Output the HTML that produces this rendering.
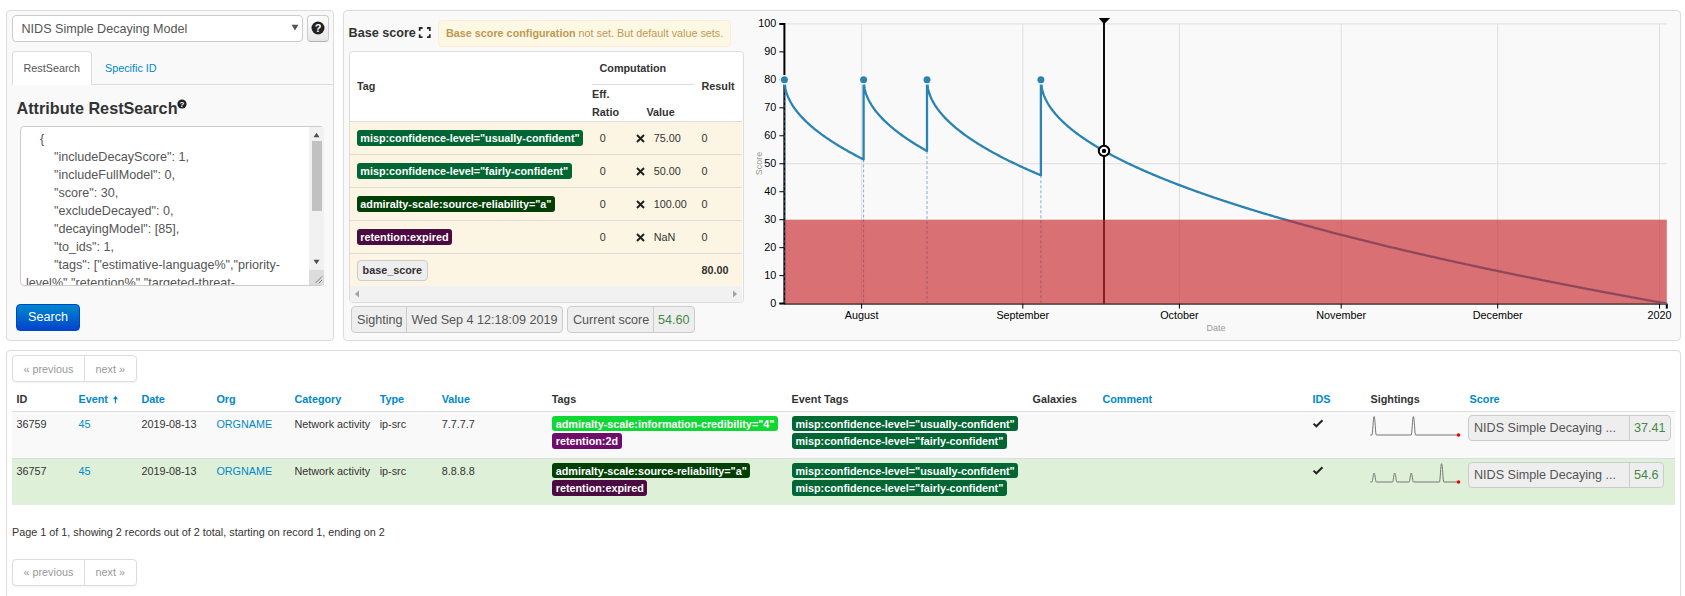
<!DOCTYPE html>
<html><head><meta charset="utf-8">
<style>
*{box-sizing:border-box}
html,body{margin:0;padding:0;background:#fff;width:1685px;height:596px;overflow:hidden;font-family:"Liberation Sans",sans-serif;color:#333;font-size:10.8px}
.abs{position:absolute}
.panel{position:absolute;background:#f9f9f9;border:1px solid #dcdcdc;border-radius:4px}
.lbl{position:absolute;display:inline-block;font-weight:bold;color:#fff;font-size:10.8px;line-height:16px;height:16px;padding:0 3.3px;border-radius:3px;white-space:nowrap}
.lbl2{position:absolute;display:inline-block;font-weight:bold;color:#fff;font-size:10.8px;line-height:17px;height:15px;padding:0 3.5px;border-radius:3px;white-space:nowrap}
a{color:#0088cc;text-decoration:none}
.t{position:absolute;white-space:nowrap}
.b{font-weight:bold}
</style></head><body>

<!-- Panel 1 -->
<div class="panel" style="left:6px;top:10px;width:328px;height:331px"></div>
<div class="abs" style="left:12px;top:15px;width:291px;height:27px;background:#fff;border:1px solid #ccc;border-radius:4px"></div>
<div class="t" style="left:21.5px;top:16px;line-height:27px;font-size:12.6px;color:#555">NIDS Simple Decaying Model</div>
<svg class="abs" style="left:291px;top:24px" width="8" height="7" viewBox="0 0 8 7"><path d="M0.6 0.8H7.4L4 6.6Z" fill="#555"/></svg>
<div class="abs" style="left:307px;top:15px;width:22px;height:27px;background:linear-gradient(#fff,#e6e6e6);border:1px solid #ccc;border-bottom-color:#b3b3b3;border-radius:4px"></div>
<svg class="abs" style="left:311px;top:21px" width="14" height="14" viewBox="0 0 14 14"><circle cx="7" cy="7" r="6.5" fill="#222"/><text x="7" y="11" text-anchor="middle" font-family="Liberation Sans" font-weight="bold" font-size="11" fill="#fff">?</text></svg>

<!-- tabs -->
<div class="abs" style="left:92px;top:84px;width:241px;height:1px;background:#ddd"></div>
<div class="abs" style="left:12px;top:51px;width:80px;height:34px;background:#f9f9f9;border:1px solid #ddd;border-bottom:none;border-radius:4px 4px 0 0"></div>
<div class="abs" style="left:13px;top:52px;width:78px;height:33px;background:#fff;border-radius:4px 4px 0 0"></div>
<div class="t" style="left:23.5px;top:51px;line-height:34px;font-size:10.8px;color:#555">RestSearch</div>
<div class="t" style="left:105px;top:51px;line-height:34px;font-size:10.8px;color:#0088cc">Specific ID</div>

<div class="t b" style="left:16.5px;top:98px;line-height:20px;font-size:16.2px;color:#333">Attribute RestSearch</div>
<svg class="abs" style="left:176.6px;top:98.6px" width="10" height="10" viewBox="0 0 10 10"><circle cx="5" cy="5" r="4.6" fill="#222"/><text x="5" y="8.2" text-anchor="middle" font-family="Liberation Sans" font-weight="bold" font-size="8" fill="#fff">?</text></svg>

<!-- textarea -->
<div class="abs" style="left:20px;top:126px;width:304px;height:160px;background:#fff;border:1px solid #ccc;border-radius:4px;overflow:hidden">
  <div class="abs" style="left:0;top:0;width:290px;padding:3px 0 0 5px;font-size:12.6px;line-height:18px;color:#555;white-space:pre">    {
        "includeDecayScore": 1,
        "includeFullModel": 0,
        "score": 30,
        "excludeDecayed": 0,
        "decayingModel": [85],
        "to_ids": 1,
        "tags": ["estimative-language%","priority-
level%","retention%","targeted-threat-</div>
</div>
<div class="abs" style="left:309px;top:127px;width:15px;height:158px;background:#f1f1f1"></div>
<div class="abs" style="left:311.5px;top:141px;width:10px;height:70px;background:#c1c1c1"></div>
<svg class="abs" style="left:309px;top:127px" width="15" height="158" viewBox="0 0 15 158"><path d="M4.5 10.2H10.5L7.5 5.8Z" fill="#505050"/><path d="M4.5 132.8H10.5L7.5 137.2Z" fill="#505050"/><rect x="0" y="143" width="15" height="15" fill="#dcdcdc"/><path d="M13 149.5L6.5 156M13 153L9.8 156.2" stroke="#6e6e6e" stroke-width="0.9"/></svg>

<div class="abs" style="left:16px;top:304px;width:64px;height:27px;background:linear-gradient(#0088cc,#0044cc);border:1px solid #0044cc;border-radius:4px"></div>
<div class="t" style="left:16px;top:304px;width:64px;text-align:center;line-height:27px;font-size:12.6px;color:#fff">Search</div>

<!-- Panel 2 -->
<div class="panel" style="left:343px;top:10px;width:1338px;height:331px"></div>
<div class="t b" style="left:348.6px;top:23px;line-height:20px;font-size:12.6px;color:#333">Base score</div>
<svg class="abs" style="left:418px;top:26px" width="14" height="13" viewBox="0 0 14 13"><path d="M1.7 5V2H4.6M9 2H11.8V5M11.8 8.2V11.2H9M4.6 11.2H1.7V8.2" fill="none" stroke="#2a2a2a" stroke-width="1.8"/></svg>

<div class="abs" style="left:438px;top:20px;width:293px;height:27px;background:#fcf8e3;border:1px solid #fbeed5;border-radius:4px"></div>
<div class="t" style="left:446px;top:20px;line-height:27px;font-size:10.8px;color:#c09853"><b>Base score configuration</b> not set. But default value sets.</div>

<div class="abs" style="left:349px;top:51px;width:395px;height:252px;background:#fff;border:1px solid #ddd;border-radius:4px;overflow:hidden">
</div>
<div class="t b" style="left:357px;top:79px;line-height:14px;font-size:10.8px">Tag</div>
<div class="t b" style="left:599.5px;top:61px;line-height:14px;font-size:10.8px">Computation</div>
<div class="abs" style="left:592px;top:84px;width:102px;height:1px;background:#ddd"></div>
<div class="t b" style="left:592px;top:87px;line-height:14px;font-size:10.8px">Eff.</div>
<div class="t b" style="left:592px;top:105px;line-height:14px;font-size:10.8px">Ratio</div>
<div class="t b" style="left:646.5px;top:105px;line-height:14px;font-size:10.8px">Value</div>
<div class="t b" style="left:701.5px;top:79px;line-height:14px;font-size:10.8px">Result</div>
<div class="abs" style="left:350px;top:121px;width:392px;height:1px;background:#ddd"></div>
<div class="abs" style="left:350px;top:122px;width:392px;height:32px;background:#fcf5e3"></div>
<div class="abs" style="left:350px;top:154px;width:392px;height:1px;background:#ddd"></div>
<div class="lbl" style="left:357px;top:130px;background:#006633">misp:confidence-level="usually-confident"</div>
<div class="t" style="left:599.8px;top:131px;line-height:14px">0</div>
<svg class="abs" style="left:636px;top:134px" width="9" height="9" viewBox="0 0 9 9"><path d="M1 1L8 8M8 1L1 8" stroke="#222" stroke-width="2"/></svg>
<div class="t" style="left:653.8px;top:131px;line-height:14px">75.00</div>
<div class="t" style="left:701.5px;top:131px;line-height:14px">0</div>
<div class="abs" style="left:350px;top:155px;width:392px;height:32px;background:#fcf5e3"></div>
<div class="abs" style="left:350px;top:187px;width:392px;height:1px;background:#ddd"></div>
<div class="lbl" style="left:357px;top:163px;background:#006633">misp:confidence-level="fairly-confident"</div>
<div class="t" style="left:599.8px;top:164px;line-height:14px">0</div>
<svg class="abs" style="left:636px;top:167px" width="9" height="9" viewBox="0 0 9 9"><path d="M1 1L8 8M8 1L1 8" stroke="#222" stroke-width="2"/></svg>
<div class="t" style="left:653.8px;top:164px;line-height:14px">50.00</div>
<div class="t" style="left:701.5px;top:164px;line-height:14px">0</div>
<div class="abs" style="left:350px;top:188px;width:392px;height:32px;background:#fcf5e3"></div>
<div class="abs" style="left:350px;top:220px;width:392px;height:1px;background:#ddd"></div>
<div class="lbl" style="left:357px;top:196px;background:#013f05">admiralty-scale:source-reliability="a"</div>
<div class="t" style="left:599.8px;top:197px;line-height:14px">0</div>
<svg class="abs" style="left:636px;top:200px" width="9" height="9" viewBox="0 0 9 9"><path d="M1 1L8 8M8 1L1 8" stroke="#222" stroke-width="2"/></svg>
<div class="t" style="left:653.8px;top:197px;line-height:14px">100.00</div>
<div class="t" style="left:701.5px;top:197px;line-height:14px">0</div>
<div class="abs" style="left:350px;top:221px;width:392px;height:32px;background:#fcf5e3"></div>
<div class="abs" style="left:350px;top:253px;width:392px;height:1px;background:#ddd"></div>
<div class="lbl" style="left:357px;top:229px;background:#4b0a41">retention:expired</div>
<div class="t" style="left:599.8px;top:230px;line-height:14px">0</div>
<svg class="abs" style="left:636px;top:233px" width="9" height="9" viewBox="0 0 9 9"><path d="M1 1L8 8M8 1L1 8" stroke="#222" stroke-width="2"/></svg>
<div class="t" style="left:653.8px;top:230px;line-height:14px">NaN</div>
<div class="t" style="left:701.5px;top:230px;line-height:14px">0</div>
<div class="abs" style="left:350px;top:254px;width:392px;height:32px;background:#fcf5e3"></div>
<div class="abs b" style="left:357px;top:260px;height:21px;padding:0 4.6px;line-height:19px;border:1px solid #ccc;border-radius:4px;background:#eee;font-size:10.8px;color:#333">base_score</div>
<div class="t b" style="left:701.5px;top:263px;line-height:14px">80.00</div>
<div class="abs" style="left:350px;top:286px;width:392px;height:16px;background:#f1f1f1"></div>
<svg class="abs" style="left:352px;top:288px" width="12" height="12"><path d="M3 6L7 2.5V9.5Z" fill="#a3a3a3"/></svg>
<svg class="abs" style="left:728px;top:288px" width="12" height="12"><path d="M9 6L5 2.5V9.5Z" fill="#a3a3a3"/></svg>
<div class="abs" style="left:351px;top:306px;width:212px;height:27px;border:1px solid #ccc;border-radius:4px;background:#eee"></div>
<div class="abs" style="left:406px;top:307px;width:1px;height:25px;background:#ccc"></div>
<div class="t" style="left:357px;top:307px;line-height:27px;font-size:12.6px;color:#555">Sighting</div>
<div class="t" style="left:411.5px;top:307px;line-height:27px;font-size:12.6px;color:#555">Wed Sep 4 12:18:09 2019</div>
<div class="abs" style="left:567px;top:306px;width:128px;height:27px;border:1px solid #ccc;border-radius:4px;background:#eee"></div>
<div class="abs" style="left:653px;top:307px;width:1px;height:25px;background:#ccc"></div>
<div class="t" style="left:573px;top:307px;line-height:27px;font-size:12.6px;color:#555">Current score</div>
<div class="t" style="left:658px;top:307px;line-height:27px;font-size:12.6px;color:#468847">54.60</div>

<!-- chart -->
<svg class="abs" style="left:0;top:0" width="1685" height="345" viewBox="0 0 1685 345">
<line x1="784.4" x2="1666.8" y1="303.60" y2="303.60" stroke="#dedede" stroke-width="1"/>
<line x1="784.4" x2="1666.8" y1="163.75" y2="163.75" stroke="#dedede" stroke-width="1"/>
<line x1="784.4" x2="1666.8" y1="23.90" y2="23.90" stroke="#dedede" stroke-width="1"/>
<line x1="861.6" x2="861.6" y1="23.90" y2="303.6" stroke="#dedede" stroke-width="1"/>
<line x1="1022.8" x2="1022.8" y1="23.90" y2="303.6" stroke="#dedede" stroke-width="1"/>
<line x1="1179.4" x2="1179.4" y1="23.90" y2="303.6" stroke="#dedede" stroke-width="1"/>
<line x1="1341.2" x2="1341.2" y1="23.90" y2="303.6" stroke="#dedede" stroke-width="1"/>
<line x1="1497.7" x2="1497.7" y1="23.90" y2="303.6" stroke="#dedede" stroke-width="1"/>
<line x1="1659.5" x2="1659.5" y1="23.90" y2="303.6" stroke="#dedede" stroke-width="1"/>
<line x1="1104" x2="1104" y1="20" y2="303.6" stroke="#000" stroke-width="1.9"/>
<path d="M779.4,23.90H784.4V303.6H779.4" fill="none" stroke="#000" stroke-width="2"/>
<line x1="779.4" x2="784.4" y1="303.60" y2="303.60" stroke="#000" stroke-width="1"/>
<text x="776.3" y="307.00" text-anchor="end" font-family="Liberation Sans" font-size="10.8" fill="#000">0</text>
<line x1="779.4" x2="784.4" y1="275.63" y2="275.63" stroke="#000" stroke-width="1"/>
<text x="776.3" y="279.03" text-anchor="end" font-family="Liberation Sans" font-size="10.8" fill="#000">10</text>
<line x1="779.4" x2="784.4" y1="247.66" y2="247.66" stroke="#000" stroke-width="1"/>
<text x="776.3" y="251.06" text-anchor="end" font-family="Liberation Sans" font-size="10.8" fill="#000">20</text>
<line x1="779.4" x2="784.4" y1="219.69" y2="219.69" stroke="#000" stroke-width="1"/>
<text x="776.3" y="223.09" text-anchor="end" font-family="Liberation Sans" font-size="10.8" fill="#000">30</text>
<line x1="779.4" x2="784.4" y1="191.72" y2="191.72" stroke="#000" stroke-width="1"/>
<text x="776.3" y="195.12" text-anchor="end" font-family="Liberation Sans" font-size="10.8" fill="#000">40</text>
<line x1="779.4" x2="784.4" y1="163.75" y2="163.75" stroke="#000" stroke-width="1"/>
<text x="776.3" y="167.15" text-anchor="end" font-family="Liberation Sans" font-size="10.8" fill="#000">50</text>
<line x1="779.4" x2="784.4" y1="135.78" y2="135.78" stroke="#000" stroke-width="1"/>
<text x="776.3" y="139.18" text-anchor="end" font-family="Liberation Sans" font-size="10.8" fill="#000">60</text>
<line x1="779.4" x2="784.4" y1="107.81" y2="107.81" stroke="#000" stroke-width="1"/>
<text x="776.3" y="111.21" text-anchor="end" font-family="Liberation Sans" font-size="10.8" fill="#000">70</text>
<line x1="779.4" x2="784.4" y1="79.84" y2="79.84" stroke="#000" stroke-width="1"/>
<text x="776.3" y="83.24" text-anchor="end" font-family="Liberation Sans" font-size="10.8" fill="#000">80</text>
<line x1="779.4" x2="784.4" y1="51.87" y2="51.87" stroke="#000" stroke-width="1"/>
<text x="776.3" y="55.27" text-anchor="end" font-family="Liberation Sans" font-size="10.8" fill="#000">90</text>
<line x1="779.4" x2="784.4" y1="23.90" y2="23.90" stroke="#000" stroke-width="1"/>
<text x="776.3" y="27.30" text-anchor="end" font-family="Liberation Sans" font-size="10.8" fill="#000">100</text>
<line x1="784.4" x2="1666.8" y1="303.90000000000003" y2="303.90000000000003" stroke="#000" stroke-opacity="0.6" stroke-width="2"/>
<path d="M1666.8,308.6V303.6" fill="none" stroke="#000" stroke-width="2"/>
<line x1="861.6" x2="861.6" y1="303.6" y2="308.6" stroke="#000" stroke-width="1"/>
<text x="861.6" y="318.8" text-anchor="middle" font-family="Liberation Sans" font-size="10.8" fill="#000">August</text>
<line x1="1022.8" x2="1022.8" y1="303.6" y2="308.6" stroke="#000" stroke-width="1"/>
<text x="1022.8" y="318.8" text-anchor="middle" font-family="Liberation Sans" font-size="10.8" fill="#000">September</text>
<line x1="1179.4" x2="1179.4" y1="303.6" y2="308.6" stroke="#000" stroke-width="1"/>
<text x="1179.4" y="318.8" text-anchor="middle" font-family="Liberation Sans" font-size="10.8" fill="#000">October</text>
<line x1="1341.2" x2="1341.2" y1="303.6" y2="308.6" stroke="#000" stroke-width="1"/>
<text x="1341.2" y="318.8" text-anchor="middle" font-family="Liberation Sans" font-size="10.8" fill="#000">November</text>
<line x1="1497.7" x2="1497.7" y1="303.6" y2="308.6" stroke="#000" stroke-width="1"/>
<text x="1497.7" y="318.8" text-anchor="middle" font-family="Liberation Sans" font-size="10.8" fill="#000">December</text>
<line x1="1659.5" x2="1659.5" y1="303.6" y2="308.6" stroke="#000" stroke-width="1"/>
<text x="1659.5" y="318.8" text-anchor="middle" font-family="Liberation Sans" font-size="10.8" fill="#000">2020</text>
<line x1="784.4" x2="784.4" y1="79.84" y2="303.6" stroke="#2b83b2" stroke-opacity="0.6" stroke-width="1" stroke-dasharray="3,2"/>
<line x1="863.6" x2="863.6" y1="159.44" y2="303.6" stroke="#2b83b2" stroke-opacity="0.6" stroke-width="1" stroke-dasharray="3,2"/>
<line x1="927.0" x2="927.0" y1="151.06" y2="303.6" stroke="#2b83b2" stroke-opacity="0.6" stroke-width="1" stroke-dasharray="3,2"/>
<line x1="1040.9" x2="1040.9" y1="175.29" y2="303.6" stroke="#2b83b2" stroke-opacity="0.6" stroke-width="1" stroke-dasharray="3,2"/>
<path d="M784.40,79.84L785.38,88.68L786.36,92.35L787.33,95.16L788.31,97.53L789.29,99.62L790.27,101.50L791.24,103.24L792.22,104.85L793.20,106.37L794.18,107.81L795.16,109.17L796.13,110.48L797.11,111.73L798.09,112.93L799.07,114.09L800.04,115.22L801.02,116.30L802.00,117.36L802.98,118.39L803.96,119.39L804.93,120.37L805.91,121.32L806.89,122.25L807.87,123.17L808.84,124.06L809.82,124.94L810.80,125.79L811.78,126.64L812.76,127.47L813.73,128.28L814.71,129.08L815.69,129.87L816.67,130.65L817.64,131.41L818.62,132.16L819.60,132.90L820.58,133.64L821.56,134.36L822.53,135.07L823.51,135.77L824.49,136.47L825.47,137.16L826.44,137.83L827.42,138.50L828.40,139.17L829.38,139.82L830.36,140.47L831.33,141.11L832.31,141.75L833.29,142.38L834.27,143.00L835.24,143.62L836.22,144.23L837.20,144.83L838.18,145.43L839.16,146.02L840.13,146.61L841.11,147.19L842.09,147.77L843.07,148.35L844.04,148.91L845.02,149.48L846.00,150.04L846.98,150.59L847.96,151.14L848.93,151.69L849.91,152.23L850.89,152.77L851.87,153.30L852.84,153.83L853.82,154.36L854.80,154.88L855.78,155.40L856.76,155.92L857.73,156.43L858.71,156.94L859.69,157.45L860.67,157.95L861.64,158.45L862.62,158.94L863.60,159.44L863.60,79.84L864.58,88.67L865.55,92.33L866.53,95.14L867.50,97.51L868.48,99.59L869.45,101.48L870.43,103.21L871.40,104.82L872.38,106.34L873.35,107.77L874.33,109.14L875.30,110.44L876.28,111.69L877.26,112.89L878.23,114.05L879.21,115.17L880.18,116.26L881.16,117.32L882.13,118.34L883.11,119.34L884.08,120.32L885.06,121.27L886.03,122.20L887.01,123.11L887.98,124.01L888.96,124.88L889.94,125.74L890.91,126.58L891.89,127.41L892.86,128.22L893.84,129.02L894.81,129.81L895.79,130.58L896.76,131.35L897.74,132.10L898.71,132.84L899.69,133.57L900.66,134.29L901.64,135.00L902.62,135.71L903.59,136.40L904.57,137.09L905.54,137.76L906.52,138.43L907.49,139.09L908.47,139.75L909.44,140.40L910.42,141.04L911.39,141.67L912.37,142.30L913.34,142.92L914.32,143.54L915.30,144.15L916.27,144.75L917.25,145.35L918.22,145.94L919.20,146.53L920.17,147.11L921.15,147.69L922.12,148.26L923.10,148.83L924.07,149.39L925.05,149.95L926.02,150.51L927.00,151.06L927.00,79.84L927.99,88.74L928.98,92.43L929.97,95.26L930.96,97.64L931.95,99.74L932.94,101.64L933.93,103.39L934.92,105.02L935.91,106.54L936.90,107.99L937.89,109.36L938.89,110.67L939.88,111.93L940.87,113.14L941.86,114.31L942.85,115.44L943.84,116.54L944.83,117.60L945.82,118.64L946.81,119.65L947.80,120.63L948.79,121.59L949.78,122.53L950.77,123.45L951.76,124.35L952.75,125.23L953.74,126.09L954.73,126.94L955.72,127.77L956.71,128.59L957.70,129.40L958.69,130.19L959.68,130.97L960.67,131.74L961.67,132.50L962.66,133.25L963.65,133.98L964.64,134.71L965.63,135.43L966.62,136.14L967.61,136.83L968.60,137.53L969.59,138.21L970.58,138.88L971.57,139.55L972.56,140.21L973.55,140.86L974.54,141.51L975.53,142.15L976.52,142.78L977.51,143.41L978.50,144.03L979.49,144.64L980.48,145.25L981.47,145.85L982.46,146.45L983.45,147.04L984.45,147.63L985.44,148.21L986.43,148.79L987.42,149.36L988.41,149.93L989.40,150.49L990.39,151.05L991.38,151.60L992.37,152.15L993.36,152.70L994.35,153.24L995.34,153.78L996.33,154.31L997.32,154.84L998.31,155.37L999.30,155.89L1000.29,156.41L1001.28,156.93L1002.27,157.44L1003.26,157.95L1004.25,158.45L1005.24,158.95L1006.23,159.45L1007.23,159.95L1008.22,160.44L1009.21,160.93L1010.20,161.42L1011.19,161.90L1012.18,162.39L1013.17,162.86L1014.16,163.34L1015.15,163.81L1016.14,164.28L1017.13,164.75L1018.12,165.22L1019.11,165.68L1020.10,166.14L1021.09,166.60L1022.08,167.05L1023.07,167.51L1024.06,167.96L1025.05,168.40L1026.04,168.85L1027.03,169.29L1028.02,169.74L1029.01,170.18L1030.01,170.61L1031.00,171.05L1031.99,171.48L1032.98,171.91L1033.97,172.34L1034.96,172.77L1035.95,173.20L1036.94,173.62L1037.93,174.04L1038.92,174.46L1039.91,174.88L1040.90,175.29L1040.90,79.84L1041.90,88.78L1042.90,92.48L1043.89,95.32L1044.89,97.71L1045.89,99.82L1046.89,101.73L1047.89,103.48L1048.89,105.12L1049.88,106.65L1050.88,108.10L1051.88,109.48L1052.88,110.80L1053.88,112.06L1054.88,113.28L1055.87,114.45L1056.87,115.58L1057.87,116.68L1058.87,117.75L1059.87,118.79L1060.86,119.80L1061.86,120.79L1062.86,121.75L1063.86,122.70L1064.86,123.62L1065.86,124.52L1066.85,125.41L1067.85,126.27L1068.85,127.13L1069.85,127.96L1070.85,128.79L1071.85,129.59L1072.84,130.39L1073.84,131.17L1074.84,131.95L1075.84,132.71L1076.84,133.46L1077.84,134.20L1078.83,134.93L1079.83,135.65L1080.83,136.36L1081.83,137.06L1082.83,137.75L1083.82,138.44L1084.82,139.12L1085.82,139.79L1086.82,140.45L1087.82,141.10L1088.82,141.75L1089.81,142.39L1090.81,143.03L1091.81,143.66L1092.81,144.28L1093.81,144.90L1094.81,145.51L1095.80,146.11L1096.80,146.71L1097.80,147.31L1098.80,147.90L1099.80,148.48L1100.79,149.06L1101.79,149.63L1102.79,150.20L1103.79,150.77L1104.79,151.33L1105.79,151.89L1106.78,152.44L1107.78,152.99L1108.78,153.53L1109.78,154.07L1110.78,154.60L1111.78,155.14L1112.77,155.67L1113.77,156.19L1114.77,156.71L1115.77,157.23L1116.77,157.74L1117.76,158.25L1118.76,158.76L1119.76,159.27L1120.76,159.77L1121.76,160.27L1122.76,160.76L1123.75,161.25L1124.75,161.74L1125.75,162.23L1126.75,162.71L1127.75,163.19L1128.75,163.67L1129.74,164.14L1130.74,164.62L1131.74,165.09L1132.74,165.55L1133.74,166.02L1134.74,166.48L1135.73,166.94L1136.73,167.40L1137.73,167.85L1138.73,168.30L1139.73,168.75L1140.72,169.20L1141.72,169.65L1142.72,170.09L1143.72,170.53L1144.72,170.97L1145.72,171.41L1146.71,171.84L1147.71,172.28L1148.71,172.71L1149.71,173.14L1150.71,173.56L1151.71,173.99L1152.70,174.41L1153.70,174.83L1154.70,175.25L1155.70,175.67L1156.70,176.08L1157.69,176.50L1158.69,176.91L1159.69,177.32L1160.69,177.73L1161.69,178.14L1162.69,178.54L1163.68,178.95L1164.68,179.35L1165.68,179.75L1166.68,180.15L1167.68,180.54L1168.68,180.94L1169.67,181.33L1170.67,181.73L1171.67,182.12L1172.67,182.51L1173.67,182.90L1174.66,183.28L1175.66,183.67L1176.66,184.05L1177.66,184.43L1178.66,184.82L1179.66,185.20L1180.65,185.57L1181.65,185.95L1182.65,186.33L1183.65,186.70L1184.65,187.07L1185.65,187.45L1186.64,187.82L1187.64,188.18L1188.64,188.55L1189.64,188.92L1190.64,189.28L1191.64,189.65L1192.63,190.01L1193.63,190.37L1194.63,190.73L1195.63,191.09L1196.63,191.45L1197.62,191.81L1198.62,192.17L1199.62,192.52L1200.62,192.87L1201.62,193.23L1202.62,193.58L1203.61,193.93L1204.61,194.28L1205.61,194.63L1206.61,194.97L1207.61,195.32L1208.61,195.67L1209.60,196.01L1210.60,196.35L1211.60,196.69L1212.60,197.04L1213.60,197.38L1214.59,197.72L1215.59,198.05L1216.59,198.39L1217.59,198.73L1218.59,199.06L1219.59,199.40L1220.58,199.73L1221.58,200.06L1222.58,200.39L1223.58,200.73L1224.58,201.06L1225.58,201.38L1226.57,201.71L1227.57,202.04L1228.57,202.37L1229.57,202.69L1230.57,203.02L1231.56,203.34L1232.56,203.66L1233.56,203.98L1234.56,204.31L1235.56,204.63L1236.56,204.95L1237.55,205.26L1238.55,205.58L1239.55,205.90L1240.55,206.22L1241.55,206.53L1242.55,206.85L1243.54,207.16L1244.54,207.47L1245.54,207.79L1246.54,208.10L1247.54,208.41L1248.54,208.72L1249.53,209.03L1250.53,209.34L1251.53,209.64L1252.53,209.95L1253.53,210.26L1254.52,210.56L1255.52,210.87L1256.52,211.17L1257.52,211.48L1258.52,211.78L1259.52,212.08L1260.51,212.38L1261.51,212.68L1262.51,212.99L1263.51,213.28L1264.51,213.58L1265.51,213.88L1266.50,214.18L1267.50,214.48L1268.50,214.77L1269.50,215.07L1270.50,215.36L1271.49,215.66L1272.49,215.95L1273.49,216.24L1274.49,216.54L1275.49,216.83L1276.49,217.12L1277.48,217.41L1278.48,217.70L1279.48,217.99L1280.48,218.28L1281.48,218.57L1282.48,218.85L1283.47,219.14L1284.47,219.43L1285.47,219.71L1286.47,220.00L1287.47,220.28L1288.46,220.57L1289.46,220.85L1290.46,221.13L1291.46,221.41L1292.46,221.70L1293.46,221.98L1294.45,222.26L1295.45,222.54L1296.45,222.82L1297.45,223.10L1298.45,223.38L1299.45,223.65L1300.44,223.93L1301.44,224.21L1302.44,224.48L1303.44,224.76L1304.44,225.03L1305.44,225.31L1306.43,225.58L1307.43,225.86L1308.43,226.13L1309.43,226.40L1310.43,226.68L1311.42,226.95L1312.42,227.22L1313.42,227.49L1314.42,227.76L1315.42,228.03L1316.42,228.30L1317.41,228.57L1318.41,228.83L1319.41,229.10L1320.41,229.37L1321.41,229.64L1322.41,229.90L1323.40,230.17L1324.40,230.43L1325.40,230.70L1326.40,230.96L1327.40,231.23L1328.39,231.49L1329.39,231.75L1330.39,232.02L1331.39,232.28L1332.39,232.54L1333.39,232.80L1334.38,233.06L1335.38,233.32L1336.38,233.58L1337.38,233.84L1338.38,234.10L1339.38,234.36L1340.37,234.62L1341.37,234.88L1342.37,235.13L1343.37,235.39L1344.37,235.65L1345.36,235.90L1346.36,236.16L1347.36,236.41L1348.36,236.67L1349.36,236.92L1350.36,237.18L1351.35,237.43L1352.35,237.68L1353.35,237.94L1354.35,238.19L1355.35,238.44L1356.35,238.69L1357.34,238.94L1358.34,239.19L1359.34,239.44L1360.34,239.69L1361.34,239.94L1362.34,240.19L1363.33,240.44L1364.33,240.69L1365.33,240.94L1366.33,241.19L1367.33,241.43L1368.32,241.68L1369.32,241.93L1370.32,242.17L1371.32,242.42L1372.32,242.66L1373.32,242.91L1374.31,243.15L1375.31,243.40L1376.31,243.64L1377.31,243.89L1378.31,244.13L1379.31,244.37L1380.30,244.61L1381.30,244.86L1382.30,245.10L1383.30,245.34L1384.30,245.58L1385.29,245.82L1386.29,246.06L1387.29,246.30L1388.29,246.54L1389.29,246.78L1390.29,247.02L1391.28,247.26L1392.28,247.50L1393.28,247.73L1394.28,247.97L1395.28,248.21L1396.28,248.45L1397.27,248.68L1398.27,248.92L1399.27,249.16L1400.27,249.39L1401.27,249.63L1402.26,249.86L1403.26,250.10L1404.26,250.33L1405.26,250.56L1406.26,250.80L1407.26,251.03L1408.25,251.26L1409.25,251.50L1410.25,251.73L1411.25,251.96L1412.25,252.19L1413.25,252.43L1414.24,252.66L1415.24,252.89L1416.24,253.12L1417.24,253.35L1418.24,253.58L1419.24,253.81L1420.23,254.04L1421.23,254.27L1422.23,254.49L1423.23,254.72L1424.23,254.95L1425.22,255.18L1426.22,255.41L1427.22,255.63L1428.22,255.86L1429.22,256.09L1430.22,256.31L1431.21,256.54L1432.21,256.77L1433.21,256.99L1434.21,257.22L1435.21,257.44L1436.21,257.67L1437.20,257.89L1438.20,258.11L1439.20,258.34L1440.20,258.56L1441.20,258.79L1442.19,259.01L1443.19,259.23L1444.19,259.45L1445.19,259.68L1446.19,259.90L1447.19,260.12L1448.18,260.34L1449.18,260.56L1450.18,260.78L1451.18,261.00L1452.18,261.22L1453.18,261.44L1454.17,261.66L1455.17,261.88L1456.17,262.10L1457.17,262.32L1458.17,262.54L1459.16,262.76L1460.16,262.98L1461.16,263.19L1462.16,263.41L1463.16,263.63L1464.16,263.85L1465.15,264.06L1466.15,264.28L1467.15,264.50L1468.15,264.71L1469.15,264.93L1470.15,265.14L1471.14,265.36L1472.14,265.57L1473.14,265.79L1474.14,266.00L1475.14,266.22L1476.14,266.43L1477.13,266.65L1478.13,266.86L1479.13,267.07L1480.13,267.29L1481.13,267.50L1482.12,267.71L1483.12,267.92L1484.12,268.14L1485.12,268.35L1486.12,268.56L1487.12,268.77L1488.11,268.98L1489.11,269.19L1490.11,269.40L1491.11,269.61L1492.11,269.82L1493.11,270.03L1494.10,270.24L1495.10,270.45L1496.10,270.66L1497.10,270.87L1498.10,271.08L1499.09,271.29L1500.09,271.50L1501.09,271.71L1502.09,271.91L1503.09,272.12L1504.09,272.33L1505.08,272.54L1506.08,272.74L1507.08,272.95L1508.08,273.16L1509.08,273.36L1510.08,273.57L1511.07,273.78L1512.07,273.98L1513.07,274.19L1514.07,274.39L1515.07,274.60L1516.06,274.80L1517.06,275.01L1518.06,275.21L1519.06,275.42L1520.06,275.62L1521.06,275.82L1522.05,276.03L1523.05,276.23L1524.05,276.43L1525.05,276.64L1526.05,276.84L1527.05,277.04L1528.04,277.25L1529.04,277.45L1530.04,277.65L1531.04,277.85L1532.04,278.05L1533.04,278.25L1534.03,278.46L1535.03,278.66L1536.03,278.86L1537.03,279.06L1538.03,279.26L1539.02,279.46L1540.02,279.66L1541.02,279.86L1542.02,280.06L1543.02,280.26L1544.02,280.46L1545.01,280.65L1546.01,280.85L1547.01,281.05L1548.01,281.25L1549.01,281.45L1550.01,281.65L1551.00,281.84L1552.00,282.04L1553.00,282.24L1554.00,282.44L1555.00,282.63L1555.99,282.83L1556.99,283.03L1557.99,283.22L1558.99,283.42L1559.99,283.61L1560.99,283.81L1561.98,284.01L1562.98,284.20L1563.98,284.40L1564.98,284.59L1565.98,284.79L1566.98,284.98L1567.97,285.18L1568.97,285.37L1569.97,285.56L1570.97,285.76L1571.97,285.95L1572.96,286.15L1573.96,286.34L1574.96,286.53L1575.96,286.73L1576.96,286.92L1577.96,287.11L1578.95,287.30L1579.95,287.50L1580.95,287.69L1581.95,287.88L1582.95,288.07L1583.95,288.26L1584.94,288.46L1585.94,288.65L1586.94,288.84L1587.94,289.03L1588.94,289.22L1589.94,289.41L1590.93,289.60L1591.93,289.79L1592.93,289.98L1593.93,290.17L1594.93,290.36L1595.92,290.55L1596.92,290.74L1597.92,290.93L1598.92,291.12L1599.92,291.31L1600.92,291.50L1601.91,291.68L1602.91,291.87L1603.91,292.06L1604.91,292.25L1605.91,292.44L1606.91,292.62L1607.90,292.81L1608.90,293.00L1609.90,293.19L1610.90,293.37L1611.90,293.56L1612.89,293.75L1613.89,293.93L1614.89,294.12L1615.89,294.31L1616.89,294.49L1617.89,294.68L1618.88,294.86L1619.88,295.05L1620.88,295.24L1621.88,295.42L1622.88,295.61L1623.88,295.79L1624.87,295.98L1625.87,296.16L1626.87,296.34L1627.87,296.53L1628.87,296.71L1629.86,296.90L1630.86,297.08L1631.86,297.27L1632.86,297.45L1633.86,297.63L1634.86,297.82L1635.85,298.00L1636.85,298.18L1637.85,298.36L1638.85,298.55L1639.85,298.73L1640.85,298.91L1641.84,299.09L1642.84,299.28L1643.84,299.46L1644.84,299.64L1645.84,299.82L1646.84,300.00L1647.83,300.18L1648.83,300.36L1649.83,300.55L1650.83,300.73L1651.83,300.91L1652.82,301.09L1653.82,301.27L1654.82,301.45L1655.82,301.63L1656.82,301.81L1657.82,301.99L1658.81,302.17L1659.81,302.35L1660.81,302.53L1661.81,302.71L1662.81,302.89L1663.81,303.06L1664.80,303.24L1665.80,303.42L1666.80,303.60" fill="none" stroke="#2b83b2" stroke-width="2.3" stroke-linejoin="round"/>
<circle cx="784.4" cy="79.84" r="4.2" fill="#2b83b2" stroke="#f9f9f9" stroke-width="1.4"/>
<circle cx="863.6" cy="79.84" r="4.2" fill="#2b83b2" stroke="#f9f9f9" stroke-width="1.4"/>
<circle cx="927.0" cy="79.84" r="4.2" fill="#2b83b2" stroke="#f9f9f9" stroke-width="1.4"/>
<circle cx="1040.9" cy="79.84" r="4.2" fill="#2b83b2" stroke="#f9f9f9" stroke-width="1.4"/>
<rect x="785.0" y="219.69" width="881.80" height="83.91" fill="rgb(200,38,44)" fill-opacity="0.65"/>
<text x="1216" y="330.9" text-anchor="middle" font-family="Liberation Sans" font-size="9" fill="#999">Date</text>
<text transform="translate(762,163.5) rotate(-90)" text-anchor="middle" font-family="Liberation Sans" font-size="9" fill="#999">Score</text>
<path d="M1098.8,18H1110.2L1104,24.2Z" fill="#000"/>
<circle cx="1104" cy="150.9" r="5.2" fill="#fff" stroke="#000" stroke-width="2"/>
<circle cx="1104" cy="150.9" r="2.2" fill="#000"/>
</svg>

<!-- Bottom panel -->
<div class="abs" style="left:6px;top:350px;width:1675px;height:260px;background:#fff;border:1px solid #dcdcdc;border-radius:4px"></div>
<div class="abs" style="left:12px;top:355px;width:125px;height:27px;border:1px solid #ddd;border-radius:4px;background:#fff;box-shadow:0 1px 2px rgba(0,0,0,.05)"></div>
<div class="abs" style="left:84px;top:356px;width:1px;height:25px;background:#ddd"></div>
<div class="t" style="left:23.5px;top:355.7px;line-height:27px;color:#999">« previous</div>
<div class="t" style="left:95.5px;top:355.7px;line-height:27px;color:#999">next »</div>
<div class="t b" style="left:16.4px;top:392px;line-height:14px;color:#333">ID</div>
<div class="t b" style="left:78.5px;top:392px;line-height:14px;color:#0088cc">Event</div>
<div class="t b" style="left:141.4px;top:392px;line-height:14px;color:#0088cc">Date</div>
<div class="t b" style="left:216.4px;top:392px;line-height:14px;color:#0088cc">Org</div>
<div class="t b" style="left:294.5px;top:392px;line-height:14px;color:#0088cc">Category</div>
<div class="t b" style="left:379.7px;top:392px;line-height:14px;color:#0088cc">Type</div>
<div class="t b" style="left:441.7px;top:392px;line-height:14px;color:#0088cc">Value</div>
<div class="t b" style="left:551.8px;top:392px;line-height:14px;color:#333">Tags</div>
<div class="t b" style="left:791.6px;top:392px;line-height:14px;color:#333">Event Tags</div>
<div class="t b" style="left:1032.5px;top:392px;line-height:14px;color:#333">Galaxies</div>
<div class="t b" style="left:1102.4px;top:392px;line-height:14px;color:#0088cc">Comment</div>
<div class="t b" style="left:1312.4px;top:392px;line-height:14px;color:#0088cc">IDS</div>
<div class="t b" style="left:1370.5px;top:392px;line-height:14px;color:#333">Sightings</div>
<div class="t b" style="left:1469.6px;top:392px;line-height:14px;color:#0088cc">Score</div>
<svg class="abs" style="left:112px;top:395px" width="7" height="9" viewBox="0 0 7 9"><path d="M3.5 0.8L1 4.3H6Z" fill="#0088cc"/><path d="M3.5 3V8.2" stroke="#0088cc" stroke-width="1.2"/></svg>
<div class="abs" style="left:12px;top:411px;width:1663px;height:1px;background:#ddd"></div>
<div class="abs" style="left:12px;top:412px;width:1663px;height:46px;background:#f9f9f9"></div>
<div class="abs" style="left:12px;top:458px;width:1663px;height:1px;background:#ddd"></div>
<div class="t" style="left:16.4px;top:417px;line-height:14px">36759</div>
<div class="t" style="left:78.5px;top:417px;line-height:14px;color:#0088cc">45</div>
<div class="t" style="left:141.4px;top:417px;line-height:14px">2019-08-13</div>
<div class="t" style="left:216.4px;top:417px;line-height:14px;color:#0088cc">ORGNAME</div>
<div class="t" style="left:294.5px;top:417px;line-height:14px">Network activity</div>
<div class="t" style="left:379.7px;top:417px;line-height:14px">ip-src</div>
<div class="t" style="left:441.7px;top:417px;line-height:14px">7.7.7.7</div>
<div class="lbl2" style="left:552.2px;top:416px;height:15px;background:#0fd834">admiralty-scale:information-credibility="4"</div>
<div class="lbl2" style="left:552.2px;top:433px;height:16px;background:#6f0d6c">retention:2d</div>
<div class="lbl2" style="left:791.9px;top:416px;height:15px;background:#006633">misp:confidence-level="usually-confident"</div>
<div class="lbl2" style="left:791.9px;top:433px;height:16px;background:#006633">misp:confidence-level="fairly-confident"</div>
<svg class="abs" style="left:1311.5px;top:419px" width="12" height="10" viewBox="0 0 12 10"><path d="M1.5 4.6L4.3 7.3L10.5 1.2" fill="none" stroke="#222" stroke-width="2"/></svg>
<svg class="abs" style="left:0;top:0" width="1685" height="596"><path d="M1370.2,435 L1371.9,435 C1372.8,435 1373.1,416.5 1374.1,416.5 C1375.1,416.5 1375.4,435 1376.3,435 L1411.2,435 C1412.1,435 1412.4,416.5 1413.4,416.5 C1414.4,416.5 1414.7,435 1415.6,435 L1458.5,435" fill="none" stroke="#777" stroke-width="1"/><circle cx="1458.5" cy="435" r="1.8" fill="#e00"/></svg>
<div class="abs" style="left:1468px;top:415px;width:203px;height:26px;border:1px solid #ccc;border-radius:4px;background:#eee"></div>
<div class="abs" style="left:1629px;top:416px;width:1px;height:24px;background:#ccc"></div>
<div class="t" style="left:1474px;top:414.5px;line-height:26px;font-size:12.6px;color:#555">NIDS Simple Decaying ...</div>
<div class="t" style="left:1634px;top:414.5px;line-height:26px;font-size:12.6px;color:#468847">37.41</div>
<div class="abs" style="left:12px;top:459px;width:1663px;height:46px;background:#dff0d8"></div>
<div class="t" style="left:16.4px;top:464px;line-height:14px">36757</div>
<div class="t" style="left:78.5px;top:464px;line-height:14px;color:#0088cc">45</div>
<div class="t" style="left:141.4px;top:464px;line-height:14px">2019-08-13</div>
<div class="t" style="left:216.4px;top:464px;line-height:14px;color:#0088cc">ORGNAME</div>
<div class="t" style="left:294.5px;top:464px;line-height:14px">Network activity</div>
<div class="t" style="left:379.7px;top:464px;line-height:14px">ip-src</div>
<div class="t" style="left:441.7px;top:464px;line-height:14px">8.8.8.8</div>
<div class="lbl2" style="left:552.2px;top:463px;height:15px;background:#013f05">admiralty-scale:source-reliability="a"</div>
<div class="lbl2" style="left:552.2px;top:480px;height:16px;background:#4b0a42">retention:expired</div>
<div class="lbl2" style="left:791.9px;top:463px;height:15px;background:#006633">misp:confidence-level="usually-confident"</div>
<div class="lbl2" style="left:791.9px;top:480px;height:16px;background:#006633">misp:confidence-level="fairly-confident"</div>
<svg class="abs" style="left:1311.5px;top:466px" width="12" height="10" viewBox="0 0 12 10"><path d="M1.5 4.6L4.3 7.3L10.5 1.2" fill="none" stroke="#222" stroke-width="2"/></svg>
<svg class="abs" style="left:0;top:0" width="1685" height="596"><path d="M1370.2,482 L1371.9,482 C1372.8,482 1373.1,473 1374.1,473 C1375.1,473 1375.4,482 1376.3,482 L1392.5,482 C1393.4,482 1393.7,473 1394.7,473 C1395.7,473 1396.0,482 1396.9,482 L1409.1,482 C1410.0,482 1410.3,473 1411.3,473 C1412.3,473 1412.6,482 1413.5,482 L1439.4,482 C1440.3,482 1440.6,463.7 1441.6,463.7 C1442.6,463.7 1442.9,482 1443.8,482 L1458.5,482" fill="none" stroke="#777" stroke-width="1"/><circle cx="1458.5" cy="482" r="1.8" fill="#e00"/></svg>
<div class="abs" style="left:1468px;top:462px;width:196px;height:26px;border:1px solid #ccc;border-radius:4px;background:#eee"></div>
<div class="abs" style="left:1629px;top:463px;width:1px;height:24px;background:#ccc"></div>
<div class="t" style="left:1474px;top:461.5px;line-height:26px;font-size:12.6px;color:#555">NIDS Simple Decaying ...</div>
<div class="t" style="left:1634px;top:461.5px;line-height:26px;font-size:12.6px;color:#468847">54.6</div>
<div class="t" style="left:12px;top:525px;line-height:14px">Page 1 of 1, showing 2 records out of 2 total, starting on record 1, ending on 2</div>
<div class="abs" style="left:12px;top:559px;width:125px;height:27px;border:1px solid #ddd;border-radius:4px;background:#fff;box-shadow:0 1px 2px rgba(0,0,0,.05)"></div>
<div class="abs" style="left:84px;top:560px;width:1px;height:25px;background:#ddd"></div>
<div class="t" style="left:23.5px;top:558.7px;line-height:27px;color:#999">« previous</div>
<div class="t" style="left:95.5px;top:558.7px;line-height:27px;color:#999">next »</div>

</body></html>
